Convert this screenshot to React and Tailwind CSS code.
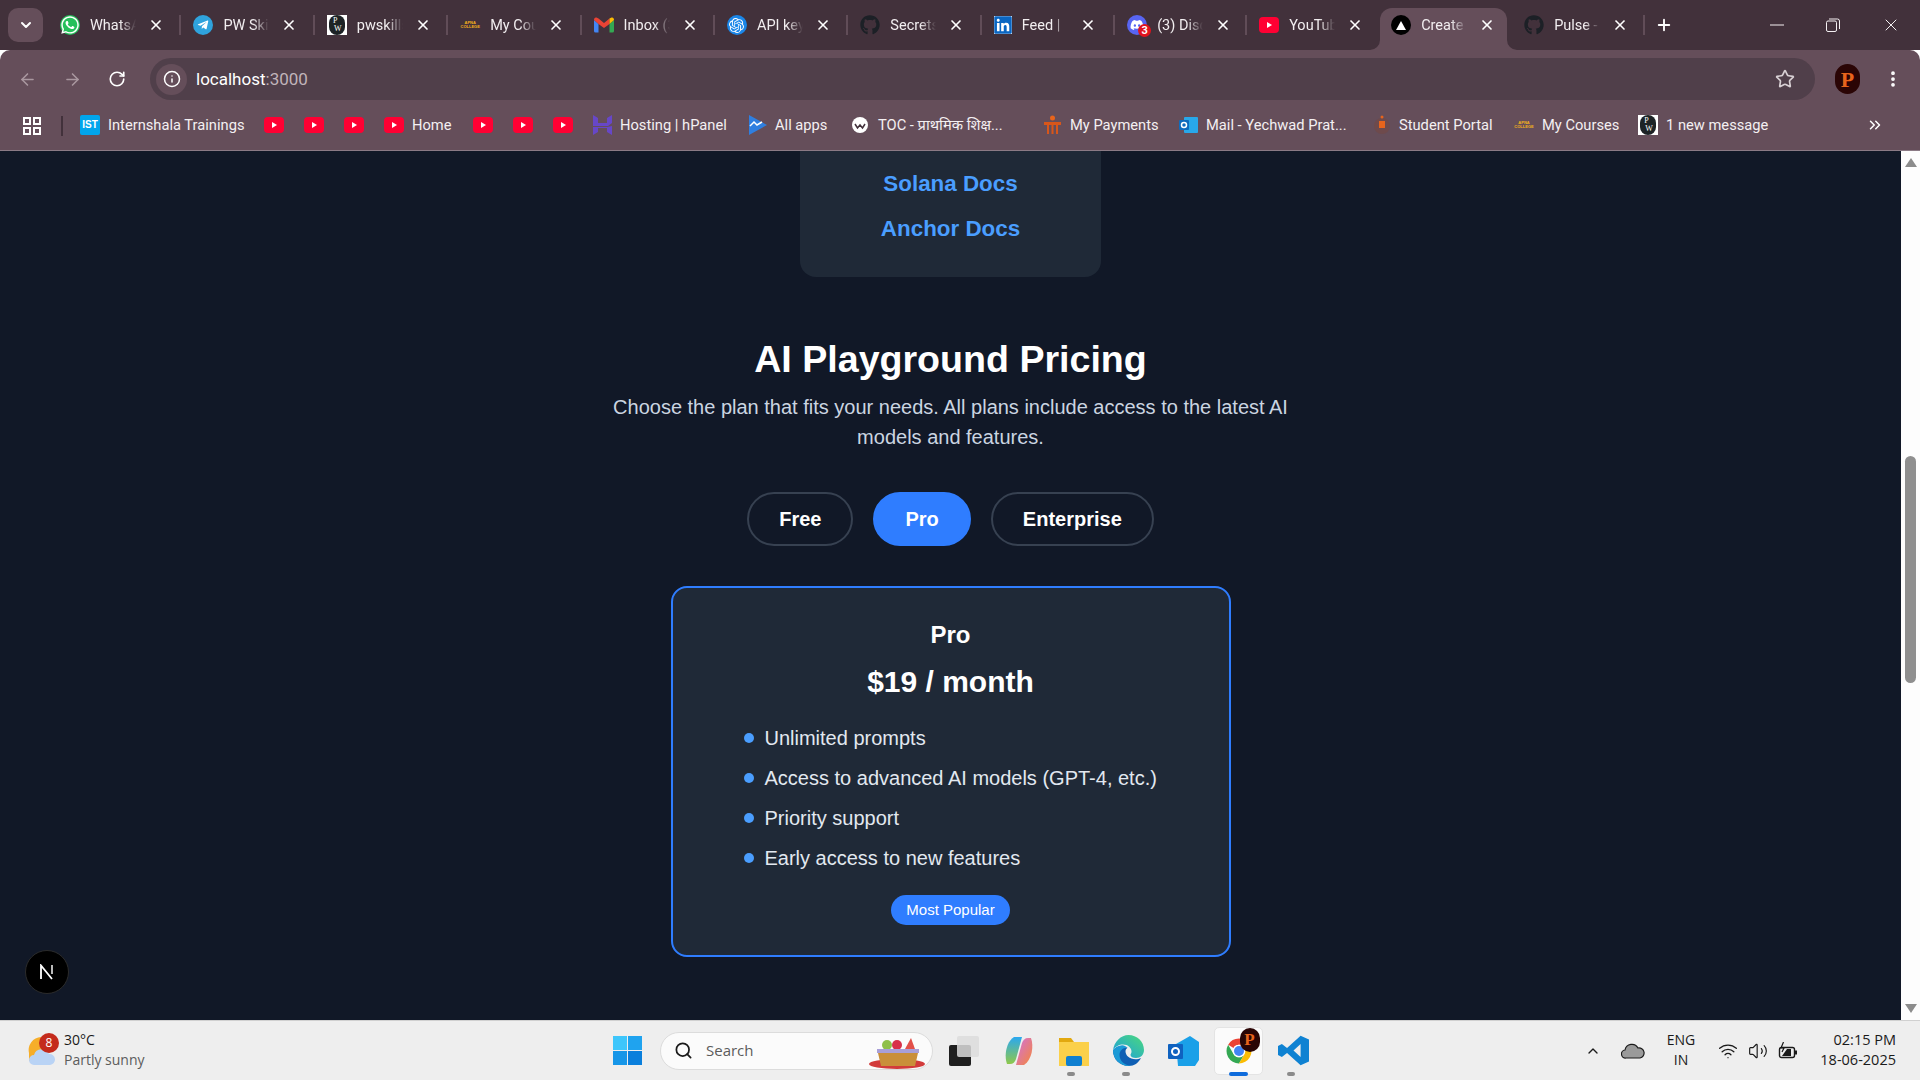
import { ArrowLeft, ArrowRight, RotateCw, Info, Star, EllipsisVertical, ChevronsRight, ChevronDown, ChevronUp, X, Plus, Search, Wifi, Volume2 } from "lucide-react";
import { FaWhatsapp, FaTelegramPlane, FaGithub, FaLinkedin, FaDiscord } from "react-icons/fa";
import { SiOpenai } from "react-icons/si";

const UI_FONT = "font-['Roboto','Liberation_Sans','Noto_Sans',sans-serif]";

function YouTubeIcon() {
  return (
    <svg width="20" height="16" viewBox="0 0 20 16" className="shrink-0">
      <rect x="0" y="0" width="20" height="16" rx="4" fill="#ff0033" />
      <path d="M8 5l5 3-5 3z" fill="#fff" />
    </svg>
  );
}

function PwIcon() {
  return (
    <div className="w-5 h-5 shrink-0 bg-white flex items-center justify-center">
      <div className="w-4 h-5 rounded-full bg-[#1d2326] flex flex-col items-center justify-center font-['Liberation_Serif',serif] text-[8px] leading-[8px] text-white">
        <span className="-ml-[3px]">P</span>
        <span className="ml-[2px]">W</span>
      </div>
    </div>
  );
}

function ApnaIcon() {
  return (
    <div className="w-5 shrink-0 flex flex-col items-center font-['Liberation_Sans',sans-serif] font-bold text-[4px] leading-[4px] text-[#f5b21b]">
      <span>APNA</span>
      <span>COLLEGE</span>
    </div>
  );
}

function GmailIcon() {
  return (
    <svg width="20" height="16" viewBox="0 0 20 16" className="shrink-0">
      <path d="M0 3v11a1.500 1.500 0 0 0 1.500 1.500H4.500V7z" fill="#4285f4" />
      <path d="M20 3v11a1.500 1.500 0 0 1-1.500 1.500H15.500V7z" fill="#34a853" />
      <path d="M0 3l4.500 4 5.500 4 5.500-4V1.500L10 6 4.500 1.500 2.500 0.500C1 0 0 1.200 0 3z" fill="#ea4335" />
      <path d="M15.500 1.500 17.500 0.500C19 0 20 1.200 20 3l-4.500 4z" fill="#fbbc04" />
    </svg>
  );
}

function TabIcon({ name }) {
  if (name === "whatsapp")
    return (
      <div className="w-5 h-5 shrink-0 rounded-full bg-[#25c05a] flex items-center justify-center">
        <FaWhatsapp className="w-5 h-5 text-white shrink-0" />
      </div>
    );
  if (name === "telegram")
    return (
      <div className="w-5 h-5 shrink-0 rounded-full bg-[#2fa3dd] flex items-center justify-center">
        <FaTelegramPlane className="w-3 h-3 text-white" />
      </div>
    );
  if (name === "pw") return <PwIcon />;
  if (name === "apna") return <ApnaIcon />;
  if (name === "gmail") return <GmailIcon />;
  if (name === "openai")
    return (
      <div className="w-5 h-5 shrink-0 rounded-full bg-[#1a86e8] flex items-center justify-center">
        <SiOpenai className="w-[15px] h-[15px] text-white" />
      </div>
    );
  if (name === "github") return <FaGithub className="w-5 h-5 shrink-0 text-[#1c2026]" />;
  if (name === "linkedin")
    return (
      <div className="w-[18px] h-[18px] shrink-0 bg-white flex items-center justify-center">
        <FaLinkedin className="w-5 h-5 shrink-0 text-[#0a66c2]" />
      </div>
    );
  if (name === "discord")
    return (
      <div className="relative w-5 h-5 shrink-0 rounded-full bg-[#5865f2] flex items-center justify-center">
        <FaDiscord className="w-3.5 h-3.5 text-white" />
        <span className="absolute -right-1 -bottom-0.5 w-[13px] h-[13px] rounded-full bg-[#e0141e] text-white text-[11px] leading-[13px] font-bold text-center">
          3
        </span>
      </div>
    );
  if (name === "youtube") return <YouTubeIcon />;
  if (name === "next")
    return (
      <div className="w-5 h-5 shrink-0 rounded-full bg-black flex items-center justify-center">
        <svg width="10" height="9" viewBox="0 0 10 9">
          <path d="M5 0l5 9H0z" fill="#fff" />
        </svg>
      </div>
    );
  return null;
}

function Tab({ icon, title, active, hideSep, w = "w-[133.4px]" }) {
  return (
    <div className={"relative h-full shrink-0 flex items-center pl-[13px] " + w}>
      {active && (
        <>
          <div className="absolute left-[2px] right-[4px] top-[8px] bottom-0 rounded-t-[12px] bg-[#654e5a]" />
          <svg width="10" height="10" viewBox="0 0 10 10" className="absolute left-[-8px] bottom-0">
            <path d="M10 0v10H0a10 10 0 0 0 10-10z" fill="#654e5a" />
          </svg>
          <svg width="10" height="10" viewBox="0 0 10 10" className="absolute right-[-6px] bottom-0">
            <path d="M0 0v10h10A10 10 0 0 1 0 0z" fill="#654e5a" />
          </svg>
        </>
      )}
      <div className="relative flex items-center">
        <TabIcon name={icon} />
        <span className="ml-[10px] mt-[2px] w-[46px] overflow-hidden whitespace-nowrap text-[14.5px] text-[#f2eef0] [mask-image:linear-gradient(to_right,black_65%,transparent)]">
          {title}
        </span>
        <X className="ml-[12px] w-4 h-4 text-white" strokeWidth={2.5} />
      </div>
      {!hideSep && <div className="absolute right-[-1px] top-[15px] w-[2px] h-5 bg-[#614d58]" />}
    </div>
  );
}

function Bookmark({ icon, label, w }) {
  return (
    <div className="flex items-center gap-2 shrink-0">
      {icon}
      <span className={"whitespace-nowrap text-[14.7px] text-[#f4f0f2] " + w}>{label}</span>
    </div>
  );
}

const tabs = [
  { icon: "whatsapp", title: "WhatsApp" },
  { icon: "telegram", title: "PW Skills" },
  { icon: "pw", title: "pwskills" },
  { icon: "apna", title: "My Courses" },
  { icon: "gmail", title: "Inbox (3)" },
  { icon: "openai", title: "API keys" },
  { icon: "github", title: "Secrets" },
  { icon: "linkedin", title: "Feed |" },
  { icon: "discord", title: "(3) Discord", w: "w-[132px]" },
  { icon: "youtube", title: "YouTube", hideSep: true, w: "w-[132px]" },
  { icon: "next", title: "Create Next", active: true, hideSep: true, w: "w-[133px]" },
  { icon: "github", title: "Pulse - ", w: "w-[133px]" },
];

function TabStrip() {
  return (
    <div className="h-[50px] shrink-0 bg-[#42313b] flex items-center pl-2 relative">
      <div className="w-[35px] h-[34px] rounded-[10px] bg-[#654e5a] flex items-center justify-center shrink-0">
        <ChevronDown className="w-4 h-4 text-white" strokeWidth={3} />
      </div>
      <div className="ml-1 flex h-full items-center">
        {tabs.map((t, i) => (
          <Tab key={i} {...t} />
        ))}
      </div>
      <Plus className="ml-[11px] w-[18px] h-[18px] text-white" strokeWidth={2.5} />
      <div className="ml-auto flex items-center h-full">
        <svg width="14" height="14" viewBox="0 0 14 14" className="mr-[42px]">
          <path d="M0 7h14" stroke="#f4f0f2" strokeWidth="1" />
        </svg>
        <svg width="14" height="14" viewBox="0 0 14 14" className="mr-[41px]">
          <rect x="0.500" y="3" width="10" height="10.500" rx="1.500" fill="none" stroke="#f4f0f2" />
          <path d="M3 1h8.500a2 2 0 0 1 2 2v8" fill="none" stroke="#f4f0f2" />
        </svg>
        <X className="mr-[19px] w-5 h-5 text-[#f4f0f2]" strokeWidth={1.2} />
      </div>
    </div>
  );
}

function Toolbar() {
  return (
    <div className="h-[50px] shrink-0 bg-[#654e5a] rounded-t-[10px] flex items-end relative">
      <div className="h-[42px] flex items-center w-full">
        <ArrowLeft className="ml-[18px] w-[19px] h-[19px] text-[#a9979f]" />
        <ArrowRight className="ml-[26px] w-[19px] h-[19px] text-[#a9979f]" />
        <RotateCw className="ml-[26px] w-[18px] h-[18px] text-white" strokeWidth={2.2} />
        <div className="ml-[24px] w-[1665px] h-[42px] rounded-full bg-[#503f4a] flex items-center pl-[6px] pr-[20px]">
          <div className="w-[31px] h-[31px] rounded-full bg-[#654e5a] flex items-center justify-center">
            <Info className="w-[18px] h-[18px] text-white" />
          </div>
          <span className="ml-[9px] mt-[2px] text-[17px] text-white">
            localhost<span className="text-[#c0b4ba]">:3000</span>
          </span>
          <Star className="ml-auto w-5 h-5 text-[#d8d0d4]" />
        </div>
        <div className="ml-[20px] w-[25px] h-[30px] rounded-full bg-[#2a0505] flex items-center justify-center font-['Liberation_Serif',serif] font-bold text-[22px] text-[#e8641c]">
          P
        </div>
        <EllipsisVertical className="ml-[23px] w-5 h-5 text-white" strokeWidth={2.5} />
      </div>
    </div>
  );
}

function BookmarksBar() {
  return (
    <div className="h-[51px] shrink-0 bg-[#654e5a] flex items-center relative">
      <svg width="18" height="18" viewBox="0 0 18 18" className="ml-[23px] shrink-0">
        <g fill="none" stroke="#fff" strokeWidth="2">
          <rect x="1" y="1" width="6" height="6" />
          <rect x="11" y="1" width="6" height="6" />
          <rect x="1" y="11" width="6" height="6" />
          <rect x="11" y="11" width="6" height="6" />
        </g>
      </svg>
      <div className="ml-[20px] mr-[17px] w-[2px] h-5 bg-[#42313b]" />
      <div className="flex items-center gap-[20px]">
        <Bookmark
          w="w-[136px]"
          label="Internshala Trainings"
          icon={
            <div className="w-5 h-5 rounded-[2px] bg-[#00a5ec] text-white font-bold text-[10px] leading-5 text-center font-['Liberation_Sans',sans-serif]">
              IST
            </div>
          }
        />
        <YouTubeIcon />
        <YouTubeIcon />
        <YouTubeIcon />
        <Bookmark w="w-[41px]" label="Home" icon={<YouTubeIcon />} />
        <YouTubeIcon />
        <YouTubeIcon />
        <YouTubeIcon />
        <Bookmark
          w="w-[109px]"
          label="Hosting | hPanel"
          icon={
            <svg width="19" height="20" viewBox="0 0 19 20" className="shrink-0">
              <path d="M0 0l5 3v5l9 0V3l5-3v8l-4 3H5l-5 0zM0 12h14l5-1v9l-5-3v-4H5v4l-5 3z" fill="#6747c7" />
            </svg>
          }
        />
        <Bookmark
          w="w-[57px]"
          label="All apps"
          icon={
            <svg width="18" height="20" viewBox="0 0 18 20" className="shrink-0">
              <path d="M0 0l18 10L0 20z" fill="#2f7fe0" />
              <path d="M1 11l4-4 3 3 5-3" fill="none" stroke="#fff" strokeWidth="1.500" />
            </svg>
          }
        />
        <Bookmark
          w="w-[145px]"
          label="TOC - प्राथमिक शिक्ष..."
          icon={
            <svg width="16" height="18" viewBox="0 0 16 18" className="shrink-0 mr-[2px]">
              <circle cx="8" cy="9" r="8" fill="#fff" />
              <path d="M3 8l2.500 4L8 9l2.500 3L13 8" fill="none" stroke="#42313b" strokeWidth="1.500" />
            </svg>
          }
        />
        <Bookmark
          w="w-[89px]"
          label="My Payments"
          icon={
            <svg width="19" height="20" viewBox="0 0 19 20" className="shrink-0">
              <circle cx="9.500" cy="3" r="2.500" fill="#e8641c" />
              <path d="M1 7h17v3H1zM4 10h2v9H4zM8.500 10h2v9h-2zM13 10h2v9h-2z" fill="#d8561a" />
            </svg>
          }
        />
        <Bookmark
          w="w-[147px]"
          label="Mail - Yechwad Prat..."
          icon={
            <svg width="19" height="20" viewBox="0 0 19 20" className="shrink-0">
              <rect x="5" y="2" width="14" height="16" rx="1" fill="#28a8ea" />
              <rect x="0" y="5" width="10" height="10" rx="1" fill="#0f6cbd" />
              <circle cx="5" cy="10" r="2.500" fill="none" stroke="#fff" strokeWidth="1.500" />
            </svg>
          }
        />
        <Bookmark
          w="w-[95px]"
          label="Student Portal"
          icon={
            <svg width="18" height="22" viewBox="0 0 18 22" className="shrink-0">
              <circle cx="9" cy="12" r="8" fill="#6e4a4c" />
              <rect x="6" y="7" width="6" height="7" fill="#e8641c" />
              <circle cx="9" cy="3" r="1.500" fill="#e8641c" />
            </svg>
          }
        />
        <Bookmark w="w-[76px]" label="My Courses" icon={<ApnaIcon />} />
        <Bookmark w="w-[102px]" label="1 new message" icon={<PwIcon />} />
      </div>
      <ChevronsRight className="absolute left-[1866px] top-[16px] w-[18px] h-[18px] text-white" />
      <div className="absolute left-0 right-0 bottom-0 h-px bg-[#8b7a85]" />
    </div>
  );
}

function PricingPage() {
  return (
    <div className="flex-1 min-w-0 relative overflow-hidden bg-[#111827] font-['Liberation_Sans',Arial,sans-serif]">
      <div className="-mt-[29px] flex flex-col items-center">
        <div className="w-[301px] bg-[#1f2937] rounded-b-2xl pb-8 flex flex-col items-center font-bold text-[22.4px] leading-8 text-[#4a9eff]">
          <div className="text-white text-2xl mb-[14px] whitespace-nowrap">Key Resources &amp; Docs</div>
          <a className="mb-[13px]">Solana Docs</a>
          <a>Anchor Docs</a>
        </div>

        <h1 className="mt-[62px] text-[37.6px] leading-10 font-bold text-white">AI Playground Pricing</h1>
        <p className="mt-[13px] w-[700px] text-center text-xl leading-[30px] text-[#cbd5e1]">
          Choose the plan that fits your needs. All plans include access to the latest AI models and features.
        </p>

        <div className="mt-10 flex gap-5">
          <button className="h-[54px] px-[30px] rounded-full border-2 border-[#374151] text-xl font-bold text-white">Free</button>
          <button className="h-[54px] px-[30px] rounded-full border-2 border-[#2f7dff] bg-[#2f7dff] text-xl font-bold text-white">Pro</button>
          <button className="h-[54px] px-[30px] rounded-full border-2 border-[#374151] text-xl font-bold text-white">Enterprise</button>
        </div>

        <div className="mt-10 w-[560px] rounded-2xl border-2 border-[#2f7dff] bg-[#1f2937] pt-[31px] pb-[30px] flex flex-col items-center">
          <h2 className="text-2xl leading-8 font-bold text-white">Pro</h2>
          <div className="mt-[13px] text-3xl leading-9 font-bold text-white">$19 / month</div>
          <ul className="mt-6 w-full pl-[71px] flex flex-col gap-3">
            {["Unlimited prompts", "Access to advanced AI models (GPT-4, etc.)", "Priority support", "Early access to new features"].map((f) => (
              <li key={f} className="flex items-center gap-[11px] text-xl leading-7 text-[#e2e8f0]">
                <span className="w-[10px] h-[10px] rounded-full bg-[#4a9eff]" />
                {f}
              </li>
            ))}
          </ul>
          <span className="mt-[23px] h-[30px] px-[15px] rounded-full bg-[#2f7dff] text-[15px] leading-[30px] text-white">Most Popular</span>
        </div>
      </div>

      <div className="absolute left-[25px] bottom-[26px] w-[44px] h-[44px] rounded-full bg-black border border-[#2b2b2b] flex items-center justify-center">
        <svg width="16" height="16" viewBox="0 0 16 16">
          <path d="M2 15V1.500L13 15" fill="none" stroke="#fff" strokeWidth="1.800" />
          <path d="M13 1v9" stroke="#cfcfcf" strokeWidth="1.800" />
        </svg>
      </div>
    </div>
  );
}

function Scrollbar() {
  return (
    <div className="w-[19px] shrink-0 bg-[#fdfdfd] relative flex flex-col justify-between items-center py-[7px]">
      <svg width="12" height="9" viewBox="0 0 12 9">
        <path d="M6 0l6 9H0z" fill="#8c8c8c" />
      </svg>
      <div className="absolute left-[4px] top-[305px] w-[11px] h-[227px] rounded-full bg-[#8f8f8f]" />
      <svg width="12" height="9" viewBox="0 0 12 9">
        <path d="M6 9l6-9H0z" fill="#8c8c8c" />
      </svg>
    </div>
  );
}

function AppCell({ children, dot, active }) {
  return (
    <div className="relative w-[55px] h-full shrink-0 flex items-center justify-center">
      {active && <div className="absolute left-[3px] w-[49px] h-[48px] top-[6px] rounded-[5px] bg-[#fbfbfb] border border-[#e4e4e4]" />}
      <div className="relative">{children}</div>
      {dot && <div className="absolute left-[21px] bottom-[4px] w-[8px] h-[4px] rounded-full bg-[#8a8a8a]" />}
      {active && <div className="absolute left-[18px] bottom-[4px] w-[19px] h-[4px] rounded-full bg-[#0f6cdc]" />}
    </div>
  );
}

function Taskbar() {
  return (
    <div className="h-[60px] shrink-0 bg-[#eeeeee] border-t border-[#d0d0d0] flex items-center relative font-['Open_Sans','Noto_Sans',sans-serif]">
      <div className="w-[613px] shrink-0 flex items-center pl-[28px]">
        <div className="relative w-[28px] h-[34px] shrink-0">
          <svg width="28" height="34" viewBox="0 0 28 34">
            <path d="M13 3a13 13 0 0 0 -12 16v8h14z" fill="#f6ae2a" />
            <path d="M6 31a5 5 0 0 1 0-10 8 8 0 0 1 15-1 5.500 5.500 0 0 1 1 11z" fill="#b9d3f5" />
          </svg>
          <span className="absolute left-[11px] -top-[1px] w-5 h-5 rounded-full bg-[#c42b1c] text-white text-[12px] leading-5 text-center">8</span>
        </div>
        <div className="ml-[8px] pb-[2px] flex flex-col text-[14px] leading-5">
          <span className="text-[#1a1a1a]">30°C</span>
          <span className="text-[#5c5c5c]">Partly sunny</span>
        </div>
      </div>
      <svg width="29" height="29" viewBox="0 0 29 29" className="shrink-0">
        <rect width="14" height="14" fill="#3ec6fb" />
        <rect x="15" width="14" height="14" fill="#1fa3ef" />
        <rect y="15" width="14" height="14" fill="#1696e8" />
        <rect x="15" y="15" width="14" height="14" fill="#0a7fdc" />
      </svg>
      <div className="ml-[18px] w-[273px] h-[38px] rounded-full bg-[#fbfbfb] border border-[#dcdcdc] flex items-center pl-[13px] shrink-0 relative">
        <Search className="w-[19px] h-[19px] text-[#1a1a1a]" strokeWidth={2.2} />
        <span className="ml-[13px] text-[15px] text-[#5c5c5c]">Search</span>
        <svg width="58" height="34" viewBox="0 0 56 34" className="absolute right-[6px] top-[3px]">
          <ellipse cx="28" cy="28" rx="28" ry="5" fill="#d23b3b" />
          <circle cx="18" cy="9" r="5" fill="#8fc04a" />
          <circle cx="28" cy="9" r="5" fill="#d8304a" />
          <path d="M36 13l6-11 4 11z" fill="#e2504a" />
          <rect x="8" y="13" width="42" height="4" fill="#a89fd8" />
          <path d="M9 17h40l-3 13H12z" fill="#c98f3a" />
        </svg>
      </div>
      <div className="ml-[3px] flex h-full">
        <AppCell>
          <svg width="30" height="30" viewBox="0 0 30 30">
            <rect x="0" y="9" width="22" height="21" rx="2" fill="#1f1f1f" />
            <rect x="8" y="0" width="22" height="21" rx="2" fill="#dcdcdc" fillOpacity="0.85" />
          </svg>
        </AppCell>
        <AppCell>
          <svg width="30" height="30" viewBox="0 0 30 30">
            <defs>
              <linearGradient id="cpA" x1="0" y1="0" x2="0" y2="1">
                <stop offset="0" stopColor="#2aa8f0" />
                <stop offset="1" stopColor="#8fc84a" />
              </linearGradient>
              <linearGradient id="cpB" x1="0" y1="0" x2="1" y2="1">
                <stop offset="0" stopColor="#d070e0" />
                <stop offset="1" stopColor="#f5873a" />
              </linearGradient>
            </defs>
            <path d="M10 1h8l-6 22c-1 3-3 5-6 5H3C0 20 2 6 10 1z" fill="url(#cpA)" />
            <path d="M20 29h-8l6-22c1-3 3-5 6-5h3c3 8 1 22-7 27z" fill="url(#cpB)" />
          </svg>
        </AppCell>
        <AppCell dot>
          <svg width="30" height="30" viewBox="0 0 30 30">
            <path d="M0 2h12l3 4h15v24H0z" fill="#e2a80f" />
            <rect y="6" width="30" height="24" fill="#fbd04a" />
            <rect x="7" y="20" width="16" height="10" rx="2" fill="#0f7fd0" />
          </svg>
        </AppCell>
        <AppCell dot>
          <svg width="31" height="31" viewBox="0 0 31 31">
            <defs>
              <linearGradient id="edg" x1="0" y1="1" x2="1" y2="0">
                <stop offset="0" stopColor="#1b9de2" />
                <stop offset="1" stopColor="#4cd97b" />
              </linearGradient>
            </defs>
            <path d="M0 15.500C0 24 6.500 31 16 31c5 0 9.500-3 12-8-1.500.8-3.500 1.300-5.500 1.300-6 0-10-3.800-10-8 0-1.500.8-2.800 2-3.500C9 10 3 11 0 15.500z" fill="#0f5fb4" />
            <path d="M19 30.600C12 31 6.500 26 6.500 20c0-4 3-7.500 8-7.200C12 10 9 9.500 6 11 3 12 1 13.500 0 15.500 0 24 7 31 16 31c1 0 2-.1 3-.4z" fill="#1b9ad6" />
            <path d="M0 15.500C1 6.500 8 0 15.500 0 24 0 31 6.500 31 15c0 5-3.500 8-8 8-3 0-5.500-1-5.500-3 0-1 .8-1.500 1-3 .3-3-2-5.500-5-7C9 8.500 3 10 0 15.500z" fill="url(#edg)" />
          </svg>
        </AppCell>
        <AppCell>
          <svg width="31" height="30" viewBox="0 0 31 30">
            <path d="M8 8L22 0l9 6v18l-4 6H10z" fill="#1aa0e8" />
            <rect x="0" y="8" width="15" height="15" rx="1" fill="#0f62c0" />
            <circle cx="7.500" cy="15.500" r="3.500" fill="none" stroke="#fff" strokeWidth="2" />
          </svg>
        </AppCell>
        <AppCell active>
          <svg width="30" height="30" viewBox="0 0 48 48">
            <path d="M24 4A20 20 0 0 1 41.320 14H24A10 10 0 0 0 15.340 19L6.680 14A20 20 0 0 1 24 4Z" fill="#ea4335" />
            <path d="M6.680 14L15.340 29A10 10 0 0 0 32.660 29L24 44A20 20 0 0 1 6.680 14Z" fill="#34a853" />
            <path d="M41.320 14H24A10 10 0 0 1 32.660 29L24 44A20 20 0 0 0 41.320 14Z" fill="#fbbc04" />
            <circle cx="24" cy="24" r="10" fill="#fff" />
            <circle cx="24" cy="24" r="8" fill="#4285f4" />
          </svg>
          <div className="absolute -right-[6px] -top-[8px] w-[20px] h-[24px] rounded-full bg-[#2a0505] text-center font-['Liberation_Serif',serif] font-bold text-[17px] leading-[24px] text-[#e8641c]">
            P
          </div>
        </AppCell>
        <AppCell dot>
          <svg width="31" height="31" viewBox="0 0 24 24">
            <path d="M17.500 0.500L24 3.500v17l-6.500 3L7 14l-4 3-3-1.500V8.500L3 7l4 3zM17.500 7L12 12l5.500 5z" fill="#0f82d2" />
          </svg>
        </AppCell>
      </div>
      <div className="absolute left-[1585px] top-0 h-full flex items-center">
        <ChevronUp className="w-4 h-4 text-[#1a1a1a]" strokeWidth={2} />
        <svg width="24" height="16" viewBox="0 0 24 16" className="ml-5">
          <path d="M5 15a4 4 0 0 1-1-8 7 7 0 0 1 13-2 5 5 0 0 1 2 10z" fill="#9a9a9a" stroke="#1a1a1a" strokeWidth="1.200" />
        </svg>
        <div className="ml-4 pb-[2px] w-10 text-center text-[14px] leading-5 text-[#1a1a1a]">
          ENG
          <br />
          IN
        </div>
        <Wifi className="ml-[17px] w-5 h-5 text-[#1a1a1a]" strokeWidth={1.6} />
        <Volume2 className="ml-[10px] w-5 h-5 text-[#1a1a1a]" strokeWidth={1.4} />
        <svg width="20" height="18" viewBox="0 0 20 18" className="ml-[10px]">
          <rect x="1.500" y="5.500" width="15" height="10" rx="2" fill="none" stroke="#1a1a1a" strokeWidth="1.400" />
          <path d="M4 14l5-7h4v7z" fill="#1a1a1a" />
          <rect x="17" y="8.500" width="2" height="4" fill="#1a1a1a" />
          <path d="M5.500 0L3 6h3l-2 4" fill="none" stroke="#1a1a1a" strokeWidth="1.200" />
        </svg>
        <div className="ml-[10px] pb-[2px] w-[88px] text-right text-[14.5px] leading-5 text-[#1a1a1a] whitespace-nowrap">
          02:15 PM
          <br />
          18-06-2025
        </div>
      </div>
    </div>
  );
}

export default function App() {
  return (
    <div className="w-[1920px] h-[1080px] overflow-hidden flex flex-col">
      <div className={UI_FONT + " shrink-0 flex flex-col"}>
        <TabStrip />
        <Toolbar />
        <BookmarksBar />
      </div>
      <div className="flex-1 min-h-0 flex">
        <PricingPage />
        <Scrollbar />
      </div>
      <Taskbar />
    </div>
  );
}
